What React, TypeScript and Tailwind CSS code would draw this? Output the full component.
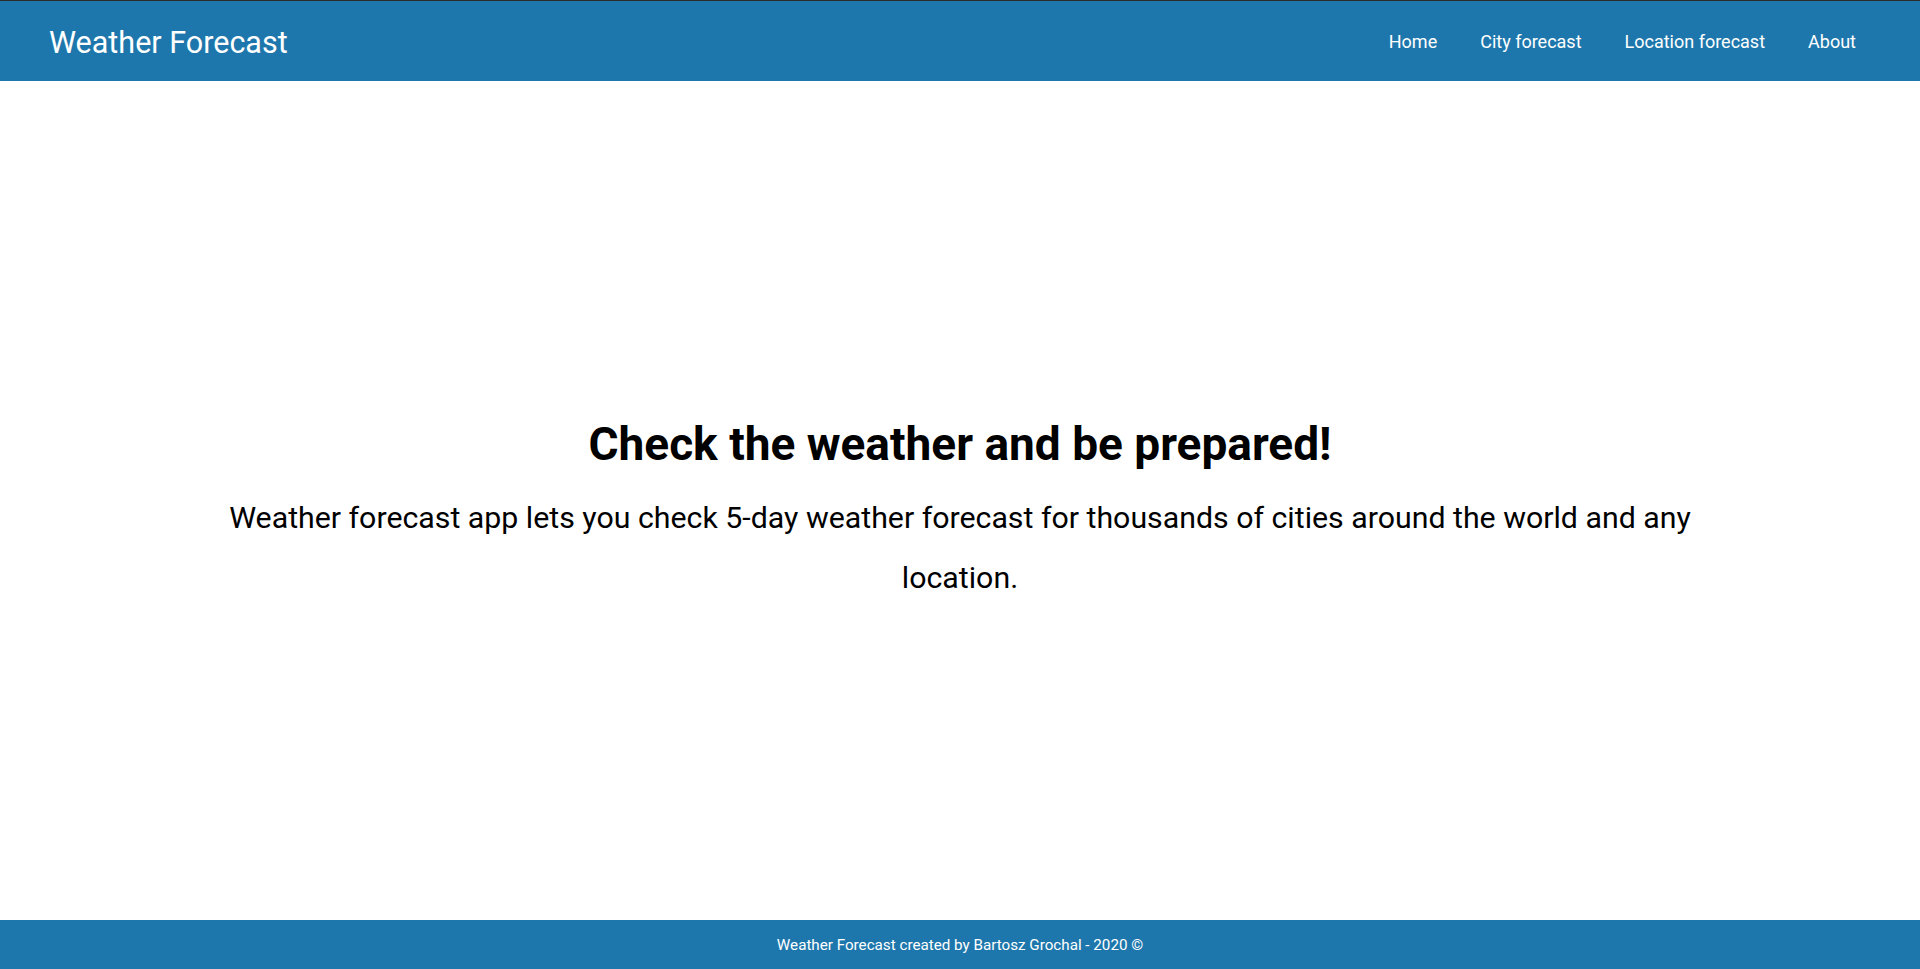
import React from 'react'

const NAV_LINKS = ['Home', 'City forecast', 'Location forecast', 'About']

const FONT = { fontFamily: 'Roboto, "Liberation Sans", sans-serif' }

function Header() {
  return (
    <header className="border-t border-[#2b2b2b] bg-[#1e77ac] h-[81px] flex items-center justify-between pl-[49px] pr-[64px] text-white">
      <a href="#" className="text-[30.5px] leading-none pt-[4px]">
        Weather Forecast
      </a>
      <nav className="flex items-center gap-[43px] text-[18px] leading-none pt-[1px]">
        {NAV_LINKS.map((link) => (
          <a key={link} href="#">
            {link}
          </a>
        ))}
      </nav>
    </header>
  )
}

function Footer() {
  return (
    <footer className="bg-[#1e77ac] h-[49px] flex items-center justify-center pt-[3px] text-white text-[15.2px] leading-none">
      Weather Forecast created by Bartosz Grochal - 2020 ©
    </footer>
  )
}

export default function App() {
  return (
    <div className="h-screen flex flex-col bg-white text-black" style={FONT}>
      <Header />
      <main className="flex-1 flex flex-col items-center justify-center pt-[24px] px-[200px] text-center">
        <h1 className="text-[46px] font-bold leading-[1.2]">Check the weather and be prepared!</h1>
        <p className="mt-[16px] text-[30.3px] leading-[60px]">
          Weather forecast app lets you check 5-day weather forecast for thousands of cities around
          the world and any location.
        </p>
      </main>
      <Footer />
    </div>
  )
}
